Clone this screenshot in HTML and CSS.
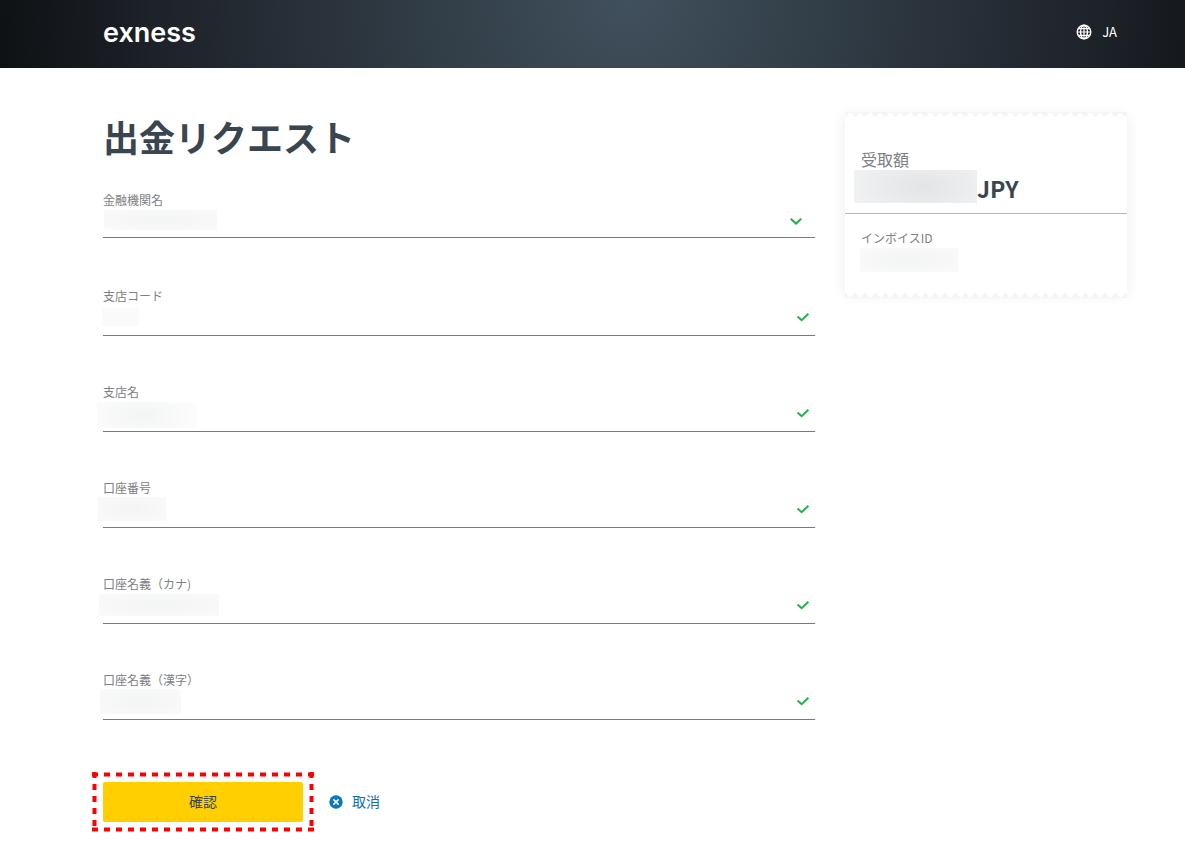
FILE: index.html
```html
<!DOCTYPE html>
<html lang="ja">

<head>
    <meta charset="UTF-8">
    <meta name="viewport" content="width=device-width, initial-scale=1.0">
    <title>出金リクエスト</title>
    <link rel="stylesheet" href="styles.css">
</head>

<body>
    <header class="header">
        <a class="logo" href="#">exness</a>
        <button class="lang" type="button">
            <svg width="16" height="16" viewBox="0 0 16 16" fill="none" stroke="#fff" stroke-width="1.4">
                <circle cx="8" cy="8" r="6.8" />
                <ellipse cx="8" cy="8" rx="3.4" ry="6.8" />
                <path d="M8 1v14M1 8h14M2 4.6h12M2 11.4h12" stroke-width="1.2" />
            </svg>
            JA
        </button>
    </header>

    <main class="page">
        <form class="request">
            <h1>出金リクエスト</h1>

            <div class="field field-select">
                <label for="bank">金融機関名</label>
                <select id="bank"><option></option></select>
                <span class="mask mask-bank"></span>
                <svg class="mark" width="14" height="10" viewBox="0 0 14 10"><path d="M1.8 2.7L7 7.6l5.2-4.9" /></svg>
            </div>
            <div class="field">
                <label for="branch-code">支店コード</label>
                <input id="branch-code" type="text">
                <span class="mask mask-code"></span>
                <svg class="mark" width="14" height="10" viewBox="0 0 14 10"><path d="M1.6 4.6L5.6 8.2l6.8-6.4" /></svg>
            </div>
            <div class="field">
                <label for="branch-name">支店名</label>
                <input id="branch-name" type="text">
                <span class="mask mask-branch"></span>
                <svg class="mark" width="14" height="10" viewBox="0 0 14 10"><path d="M1.6 4.6L5.6 8.2l6.8-6.4" /></svg>
            </div>
            <div class="field">
                <label for="account">口座番号</label>
                <input id="account" type="text">
                <span class="mask mask-account"></span>
                <svg class="mark" width="14" height="10" viewBox="0 0 14 10"><path d="M1.6 4.6L5.6 8.2l6.8-6.4" /></svg>
            </div>
            <div class="field">
                <label for="name-kana">口座名義（カナ)</label>
                <input id="name-kana" type="text">
                <span class="mask mask-kana"></span>
                <svg class="mark" width="14" height="10" viewBox="0 0 14 10"><path d="M1.6 4.6L5.6 8.2l6.8-6.4" /></svg>
            </div>
            <div class="field">
                <label for="name-kanji">口座名義（漢字）</label>
                <input id="name-kanji" type="text">
                <span class="mask mask-kanji"></span>
                <svg class="mark" width="14" height="10" viewBox="0 0 14 10"><path d="M1.6 4.6L5.6 8.2l6.8-6.4" /></svg>
            </div>

            <div class="actions">
                <div class="highlight">
                    <button class="confirm" type="submit">確認</button>
                    <svg class="dashes" width="222" height="60" viewBox="0 0 222 60">
                        <path d="M0 2.5h222M0 57.5h222M2.5 0v60M219.5 0v60" />
                    </svg>
                </div>
                <a class="cancel" href="#">
                    <svg width="14" height="14" viewBox="0 0 14 14">
                        <circle cx="7" cy="7" r="6.7" fill="#0a78ba" />
                        <path d="M4.4 4.4l5.2 5.2M9.6 4.4l-5.2 5.2" stroke="#fff" stroke-width="1.5" />
                    </svg>
                    <span>取消</span>
                </a>
            </div>
        </form>

        <aside class="receipt">
            <div class="amount">
                <p>受取額</p>
                <strong>JPY</strong>
                <span class="mask mask-amount"></span>
            </div>
            <div class="invoice">
                <p>インボイスID</p>
                <span class="mask mask-invoice"></span>
            </div>
        </aside>
    </main>
</body>

</html>
```
FILE: styles.css
```css
* {
    margin: 0;
    padding: 0;
    box-sizing: border-box;
}

body {
    background: #fff;
    color: #39454f;
    font-family: "Noto Sans CJK JP", sans-serif;
    font-size: 14px;
}

a {
    text-decoration: none;
}

button,
input,
select {
    font: inherit;
    border: 0;
    background: none;
}

.header {
    display: flex;
    align-items: center;
    justify-content: space-between;
    height: 68px;
    padding: 0 68px 4px 103px;
    background: radial-gradient(ellipse 54% 900% at 53% 0, #41505d 0%, #33404a 27%, #20242c 70%, #0d1113 100%);
}

.logo {
    padding-top: 2px;
    color: #fff;
    font-family: Inter, sans-serif;
    font-size: 27px;
    font-weight: 600;
    line-height: 32px;
}

.lang {
    display: flex;
    align-items: center;
    gap: 10px;
    color: #fff;
    font-size: 13px;
    line-height: 20px;
    cursor: pointer;
}

.page {
    display: grid;
    grid-template-columns: 1fr 282px;
    gap: 30px;
    align-items: start;
    padding: 48px 58px 24px 103px;
}

h1 {
    margin-bottom: 36px;
    font-size: 36px;
    line-height: 40px;
}

.field {
    position: relative;
    height: 96px;
}

.field label {
    display: block;
    color: #7d8084;
    font-size: 12px;
    line-height: 16px;
}

.field input,
.field select {
    display: block;
    width: 100%;
    height: 32px;
    border-bottom: 1px solid #1fb24a;
    border-radius: 0;
    outline: none;
    appearance: none;
}

.field-select select {
    height: 30px;
}

.mark {
    position: absolute;
    top: 24px;
    right: 5px;
    fill: none;
    stroke: #1fb24a;
    stroke-width: 2;
}

.field-select .mark {
    right: 12px;
}

/* hidden values */
.mask {
    position: absolute;
    background: radial-gradient(ellipse at center, #f3f4f4, #fafafa);
}

.mask-bank {
    top: 18px;
    left: 1px;
    width: 113px;
    height: 20px;
}

.mask-code {
    top: 20px;
    left: -1px;
    width: 37px;
    height: 18px;
    background: #fafafa;
}

.mask-branch {
    top: 18px;
    left: -6px;
    width: 100px;
    height: 26px;
    background: radial-gradient(ellipse 60% 120% at 45% 50%, #f3f4f4, #fdfdfd);
}

.mask-account {
    top: 17px;
    left: -5px;
    width: 68px;
    height: 24px;
}

.mask-kana {
    top: 18px;
    left: -4px;
    width: 120px;
    height: 22px;
}

.mask-kanji {
    top: 17px;
    left: -3px;
    width: 81px;
    height: 25px;
}

.actions {
    display: flex;
    align-items: center;
    gap: 26px;
    padding-top: 14px;
}

.highlight {
    position: relative;
}

.confirm {
    display: block;
    width: 200px;
    height: 40px;
    padding-bottom: 2px;
    border-radius: 2px;
    background: #ffcf01;
    color: #39454f;
    cursor: pointer;
}

.dashes {
    position: absolute;
    top: -10px;
    left: -11px;
    fill: none;
    stroke: #f00;
    stroke-width: 4;
    stroke-dasharray: 6 6;
    pointer-events: none;
}

.cancel {
    display: flex;
    align-items: center;
    gap: 9px;
    color: #0a72b0;
}

.cancel span {
    padding-bottom: 2px;
}

.receipt {
    position: relative;
    background: #fff;
    box-shadow: 0 0 14px rgba(0, 0, 0, 0.08);
}

/* torn paper edges */
.receipt::before,
.receipt::after {
    content: "";
    position: absolute;
    left: 0;
    width: 100%;
    height: 5px;
    background: conic-gradient(from 135deg at 50% 0, #fff 90deg, #f5f5f5 0) 0 0 / 10px 5px;
}

.receipt::before {
    top: -4px;
}

.receipt::after {
    bottom: -4px;
    transform: scaleY(-1);
}

.amount,
.invoice {
    position: relative;
    padding: 0 16px;
}

.amount {
    height: 98px;
    padding-top: 32px;
    border-bottom: 1px solid #b3b8b6;
}

.amount p {
    color: #7d8084;
    font-size: 16px;
    line-height: 22px;
}

.amount strong {
    display: block;
    padding-left: 116px;
    font-size: 23px;
    line-height: 36px;
}

.invoice {
    height: 80px;
    padding-top: 16px;
}

.invoice p {
    color: #7d8084;
    font-size: 12px;
    line-height: 16px;
}

.mask-amount {
    top: 54px;
    left: 9px;
    width: 123px;
    height: 33px;
    background: radial-gradient(ellipse 70% 120% at 55% 50%, #e3e4e6, #f3f4f4);
}

.mask-invoice {
    top: 34px;
    left: 15px;
    width: 98px;
    height: 24px;
}
```
